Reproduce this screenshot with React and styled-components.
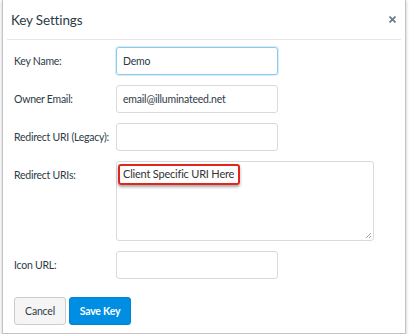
import React from 'react';
import styled, { createGlobalStyle } from 'styled-components';

const Global = createGlobalStyle`
  body {
    margin: 0;
    background: #fff;
    font-family: Lato, "Open Sans", sans-serif;
    color: #2d3b45;
  }
`

const Dialog = styled.div`
  margin: 0 3px 0 2px;
  height: 334px;
  box-sizing: border-box;
  border: 1px solid #c4c4c4;
  border-top: none;
  box-shadow: 0 1px 3px rgba(0, 0, 0, 0.25);
  background: #fff;
  display: flex;
  flex-direction: column;
`

const Header = styled.div`
  margin: 0 4px;
  height: 39px;
  border-bottom: 1px solid #e4e6e8;
  display: flex;
  align-items: center;
  justify-content: space-between;
  padding: 0 5px 0 4px;
`

const Title = styled.h2`
  margin: 0;
  font-size: 13.5px;
  letter-spacing: -0.15px;
  font-weight: 400;
  color: #2d3b45;
`

const Close = styled.svg`
  display: block;
`

const Body = styled.div`
  padding: 7px 11px 0 11px;
`

const Form = styled.div`
  display: grid;
  grid-template-columns: 102px 1fr;
  row-gap: 10px;
  align-items: center;
`

const Label = styled.label`
  font-size: 10.5px;
  letter-spacing: -0.25px;
  white-space: nowrap;
  color: #2d3b45;
  align-self: ${p => (p.top ? 'start' : 'center')};
  padding-top: ${p => (p.top ? '8px' : '0')};
`

const Input = styled.div`
  box-sizing: border-box;
  width: ${p => p.w || 162}px;
  height: ${p => p.h || 28}px;
  border: 1px solid ${p => (p.focus ? '#8ccbea' : '#d7dbde')};
  box-shadow: ${p => (p.focus ? '0 0 0 1px rgba(140,203,234,0.35)' : 'none')};
  border-radius: 3px;
  font-size: 10.5px;
  letter-spacing: -0.2px;
  color: #2d3b45;
  padding: 0 6px;
  display: flex;
  align-items: center;
  position: relative;
`

const TextArea = styled(Input)`
  align-items: flex-start;
  padding-top: 5px;
  font-size: 11px;
  color: #333;
`

const Highlight = styled.span`
  position: absolute;
  left: 1px;
  top: 2px;
  width: 122px;
  height: 21px;
  box-sizing: border-box;
  border: 2px solid #e3261c;
  border-radius: 3px;
  box-shadow: 0 2px 3px rgba(0, 0, 0, 0.35);
`

const Grip = styled.svg`
  position: absolute;
  right: 1px;
  bottom: 1px;
`

const Actions = styled.div`
  display: flex;
  gap: 3px;
  margin-top: 18px;
`

const Button = styled.button`
  height: 28px;
  box-sizing: border-box;
  border-radius: 3px;
  font-family: Lato, sans-serif;
  font-size: 10.5px;
  letter-spacing: -0.2px;
  padding: 0;
  width: ${p => p.w}px;
  border: 1px solid ${p => (p.primary ? '#0084d1' : '#c7cdd1')};
  background: ${p => (p.primary ? '#008ee2' : '#f5f5f5')};
  color: ${p => (p.primary ? '#fff' : '#2d3b45')};
  font-weight: ${p => (p.primary ? 700 : 400)};
`

export default function App() {
  return (
    <>
      <Global />
      <Dialog>
        <Header>
          <Title>Key Settings</Title>
          <Close width="7" height="7" viewBox="0 0 7 7">
            <path d="M0.5 0.5L6.5 6.5M6.5 0.5L0.5 6.5" stroke="#6b7780" strokeWidth="1.6" />
          </Close>
        </Header>
        <Body>
          <Form>
            <Label>Key Name:</Label>
            <Input focus>Demo</Input>
            <Label>Owner Email:</Label>
            <Input>email@illuminateed.net</Input>
            <Label>Redirect URI (Legacy):</Label>
            <Input />
            <Label top>Redirect URIs:</Label>
            <TextArea w={258} h={80}>
              Client Specific URI Here
              <Highlight />
              <Grip width="7" height="7" viewBox="0 0 7 7">
                <path d="M6 1L1 6M6 4L4 6" stroke="#9aa3a9" strokeWidth="1" />
              </Grip>
            </TextArea>
            <Label>Icon URL:</Label>
            <Input />
          </Form>
          <Actions>
            <Button w={52}>Cancel</Button>
            <Button primary w={62}>Save Key</Button>
          </Actions>
        </Body>
      </Dialog>
    </>
  );
}
